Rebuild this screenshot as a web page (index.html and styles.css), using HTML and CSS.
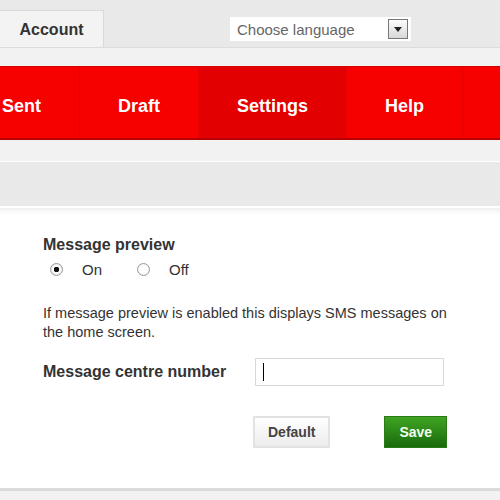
FILE: index.html
```html
<!DOCTYPE html>
<html lang="en">
<head>
    <meta charset="UTF-8">
    <title>Settings</title>
    <link rel="stylesheet" href="styles.css">
</head>
<body>

    <div class="topbar">
        <div class="tab">Account</div>
        <div class="lang">
            <span>Choose language</span>
            <span class="drop"><svg width="8" height="5" viewBox="0 0 8 5"><path d="M0 0h8L4 5z" fill="#222"/></svg></span>
        </div>
    </div>

    <div class="nav">
        <div class="nav-item first">Sent</div>
        <div class="nav-item">Draft</div>
        <div class="nav-item active">Settings</div>
        <div class="nav-item">Help</div>
        <div class="nav-item last"></div>
    </div>

    <div class="band"></div>

    <div class="content">
        <div class="label">Message preview</div>
        <div class="radios">
            <label><input type="radio" name="preview" checked> On</label>
            <label><input type="radio" name="preview"> Off</label>
        </div>
        <p class="hint">If message preview is enabled this displays SMS messages on the home screen.</p>
        <div class="row">
            <div class="label">Message centre number</div>
            <div class="field"><span class="caret"></span></div>
        </div>
        <div class="buttons">
            <button class="btn">Default</button>
            <button class="btn save">Save</button>
        </div>
    </div>

    <div class="footer"></div>

</body>
</html>
```

FILE: styles.css
```css
body {
    margin: 0;
    background: #f2f2f2;
    font-family: "Liberation Sans", Arial, sans-serif;
    color: #333;
    overflow: hidden;
}

.topbar {
    display: flex;
    height: 47px;
    background: #e9e9e9;
    border-bottom: 1px solid #dcdcdc;
}

.tab {
    align-self: flex-end;
    width: 104px;
    height: 37px;
    box-sizing: border-box;
    padding-top: 10px;
    background: #f3f3f3;
    border: 1px solid #dadada;
    border-left: none;
    border-bottom: none;
    text-align: center;
    font-size: 16px;
    font-weight: bold;
    color: #333;
}

.lang {
    display: flex;
    align-items: center;
    justify-content: space-between;
    margin: 17px 0 0 126px;
    width: 181px;
    height: 24px;
    box-sizing: border-box;
    padding: 0 3px 0 7px;
    background: #fff;
    font-size: 15px;
    color: #666;
}

.drop {
    display: flex;
    align-items: center;
    justify-content: center;
    width: 18px;
    height: 18px;
    border: 1px solid #777;
    background: linear-gradient(#fdfdfd, #d8d8d8);
}

.nav {
    display: flex;
    margin-top: 18px;
    padding-left: 2px;
    height: 71px;
    background: #f60000;
    border-top: 1px solid #d40000;
    border-bottom: 2px solid #b80000;
}

.nav-item {
    padding: 29px 38px 0;
    border-right: 1px solid #e80000;
    color: #fff;
    font-size: 18px;
    font-weight: bold;
}

.nav-item.first {
    padding-left: 0;
}

.nav-item.last {
    flex: 1;
    padding: 0;
    border-right: none;
}

.nav-item.active {
    background: #e20000;
}

.band {
    margin-top: 21px;
    height: 44px;
    background: #e9e9e9;
    border-top: 1px solid #fff;
    border-bottom: 2px solid #fff;
}

.content {
    margin-top: 2px;
    height: 278px;
    box-sizing: border-box;
    padding: 26px 43px 0;
    background: linear-gradient(#f7f7f7, #fff 6px);
}

.label {
    font-size: 16px;
    font-weight: bold;
    color: #333;
}

.radios {
    display: flex;
    gap: 35px;
    margin: 7px 0 0 7px;
    font-size: 15px;
}

.radios label {
    display: flex;
    align-items: center;
    gap: 19px;
}

.radios input {
    appearance: none;
    margin: 0;
    width: 13px;
    height: 13px;
    border-radius: 50%;
    border: 1px solid #999;
    background: radial-gradient(#fff 50%, #ddd);
    box-sizing: border-box;
}

.radios input:checked {
    background: radial-gradient(#111 2.5px, #fff 3px, #ddd);
}

.hint {
    margin: 26px 0 0;
    max-width: 412px;
    font-size: 14.5px;
    line-height: 19px;
    color: #333;
}

.row {
    display: flex;
    align-items: center;
    gap: 29px;
    margin-top: 16px;
}

.field {
    display: flex;
    align-items: center;
    width: 189px;
    height: 28px;
    box-sizing: border-box;
    padding-left: 7px;
    border: 1px solid #d8d8d8;
    background: #fff;
}

.caret {
    width: 1px;
    height: 18px;
    background: #000;
}

.buttons {
    display: flex;
    gap: 54px;
    margin: 30px 0 0 210px;
}

.btn {
    height: 32px;
    padding: 0 13px;
    border: 2px solid #e2e2e2;
    background: linear-gradient(#fff, #ececec);
    font-family: "Liberation Sans", Arial, sans-serif;
    font-size: 14px;
    font-weight: bold;
    color: #444;
}

.btn.save {
    padding: 0 14px;
    border: 1px solid #2a7a16;
    background: linear-gradient(#3fa424, #1a6a0c);
    color: #f0fff0;
}

.footer {
    height: 12px;
    border-top: 3px solid #dadada;
    background: #f2f2f2;
}
```
